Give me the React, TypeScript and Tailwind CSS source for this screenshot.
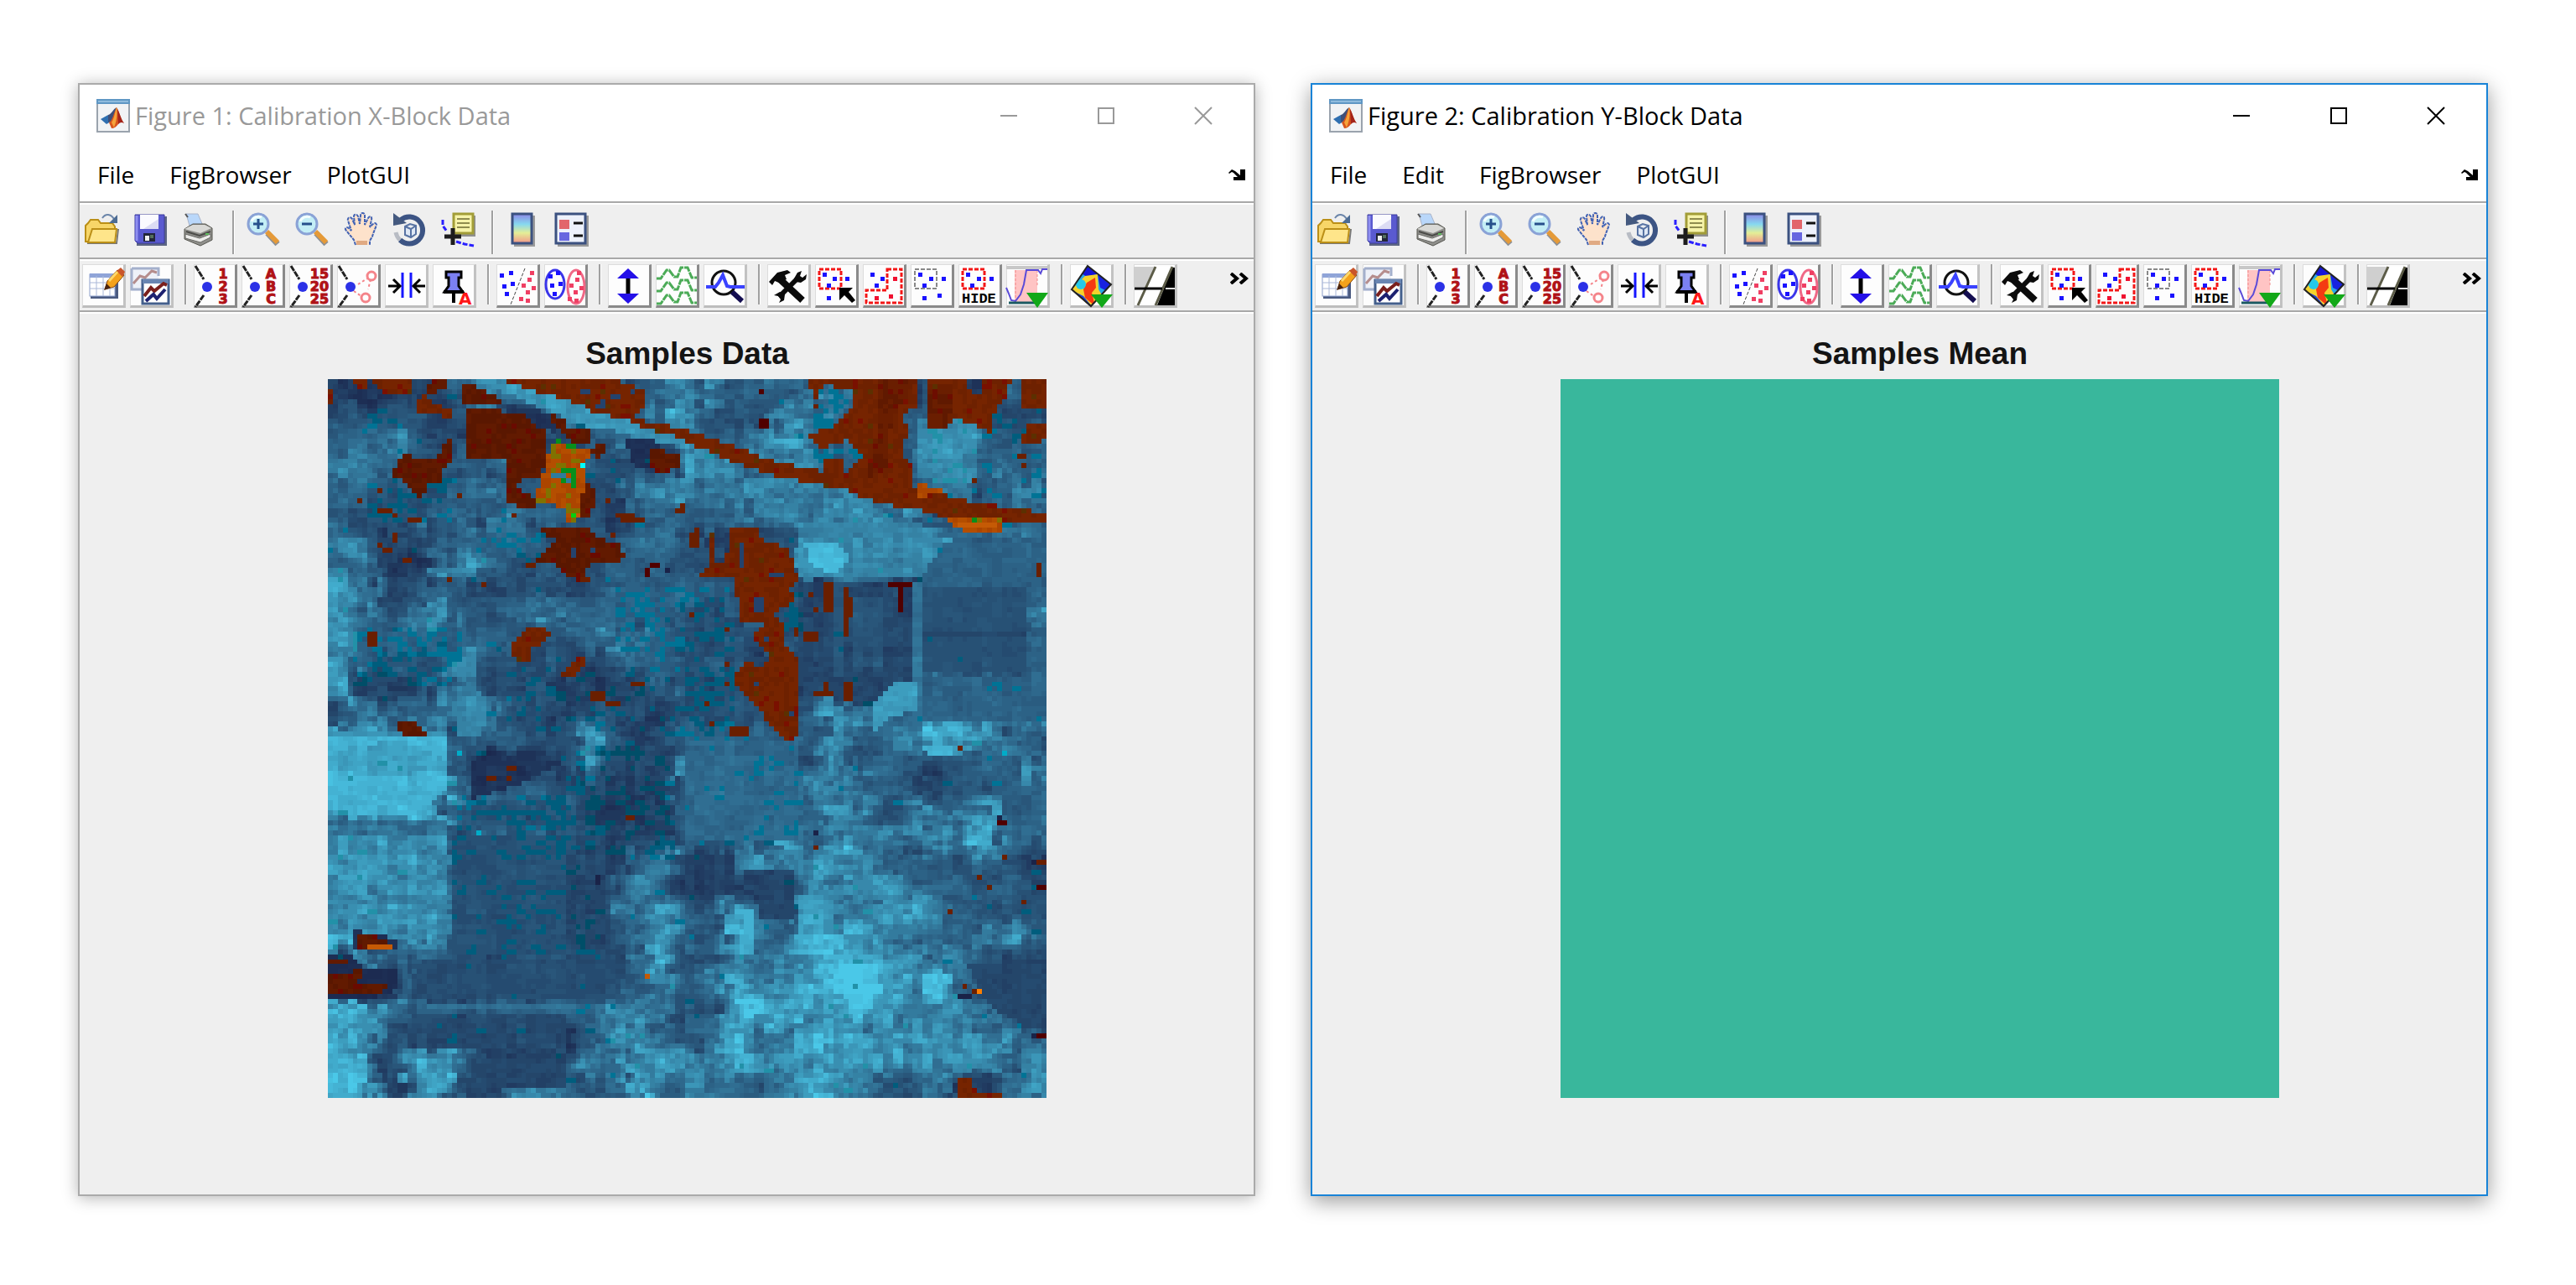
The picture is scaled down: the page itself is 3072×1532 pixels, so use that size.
import type { ReactNode } from "react"

/* ---------- raster of the X-block samples image ---------- */

const N = 145

// brightness of the scene, one digit for each 5x5 block
const COARSE = [
  "21122465533335" + "654445553233243",
  "33332321256445" + "633265532345333",
  "44543222223453" + "644575443466434",
  "65433455234332" + "765555443467454",
  "44333445433355" + "655555565455355",
  "33334455443244" + "445554565644444",
  "54224444433345" + "322338866664454",
  "45215643333444" + "333337966644444",
  "75234323333444" + "443332333133334",
  "65356334554444" + "333332332133335",
  "74444443334554" + "333333234233334",
  "64333533332344" + "333221243233334",
  "72224633322224" + "333332235744444",
  "35445753323332" + "333334654455545",
  "88875344336423" + "444443644577653",
  "77776311125222" + "555543634433445",
  "89988444432222" + "555536554323344",
  "56785433332222" + "444744753555744",
  "66557344433222" + "434375656564844",
  "77667333332245" + "215656764433432",
  "65666333322364" + "222237566544343",
  "75566333323556" + "436537656754333",
  "75675333332357" + "437548876544564",
  "25344333333347" + "336567887755322",
  "21142222233346" + "457667898684322",
  "87644444444555" + "338886787656532",
  "87322223213574" + "447657866666654",
  "87377422236467" + "667676776766656",
  "87267326643484" + "554458753352246",
]

// fields with sharp edges: polygon, brightness, grain
const FIELDS: [string, number, number][] = [
  ["29,0 38,0 73,12 73,14 51,9", 6.6, 0.8],
  ["0,72 24,72 24,83 20,86 17,88 4,88 0,84", 8, 0.6],
  ["0,76 5,74 15,73 24,77 24,79 10,80 0,79", 7.2, 0.7],
  ["0,71 24,71 24,72 0,72", 6.5, 0.5],
  ["0,92 24,92 24,112 0,112", 6.2, 1.3],
  ["0,89 24,89 24,92 0,92", 4.6, 1.2],
  ["25,92 48,92 48,116 25,116", 3, 0.4],
  ["48,96 57,96 57,115 48,115", 2.4, 0.6],
  ["29,77 48,77 38,82 31,84 29,86", 1, 0.5],
  ["19,117 61,117 58,125 17,125 17,121", 2.8, 0.4],
  ["20,126 50,126 50,127 20,127", 4.8, 0.3],
  ["17,128 48,128 48,135 17,135", 2.5, 0.5],
  ["29,137 48,137 48,143 35,143 35,145 28,145", 2.3, 0.5],
  ["72,73 95,73 95,93 72,93", 4.4, 0.5],
  ["72,96 82,96 82,104 72,104", 1.9, 0.5],
  ["84,99 94,99 94,109 87,109 87,103 84,103", 2.3, 0.5],
  ["129,118 145,118 145,131 141,131 133,126", 2.4, 0.3],
  ["120,33 141,33 141,42 120,42", 4, 0.4],
  ["120,42 141,42 141,59 120,59", 3, 0.3],
  ["120,51 141,51 141,52 120,52", 2.4, 0.3],
  ["120,60 145,60 145,69 120,69", 4, 0.5],
  ["95,41 118,41 118,60 114,65 108,66 95,62", 2.3, 0.6],
  ["106,44 112,44 112,58 106,58", 3.3, 0.5],
  ["102,41 104,41 104,60 102,60", 3.3, 0.3],
  ["118,41 120,41 120,71 118,71", 4.9, 0.5],
  ["119,8 131,8 131,21 119,20", 6, 1],
  ["95,29 119,29 124,33 120,40 95,40", 6, 0.8],
  ["96,33 103,33 105,36 103,39 98,38", 8.2, 0.4],
  ["27,54 30,54 30,62 33,66 31,72 26,72", 5.8, 0.8],
  ["110,65 115,61 119,61 119,67 114,68 110,71", 6.9, 0.6],
  ["103,118 111,118 110,127 105,127", 8.8, 0.4],
  ["84,107 86,107 86,116 83,116", 8, 0.5],
  ["5,111 14,113 14,115 5,115", 0.8, 0.4],
  ["0,116 4,116 8,119 14,119 14,123 9,125 0,125", 0.4, 0.3],
  ["60,12 66,12 68,17 62,18", 0.8, 0.4],
  ["36,5 46,7 46,11 41,9 37,7", 1.2, 0.5],
  ["95,104 102,104 102,112 95,113", 7, 0.8],
  ["120,74 126,74 126,76 121,76", 8.2, 0.5],
]

// x, y, w, h, share of teal cells
const TEAL: [number, number, number, number, number][] = [
  [58, 42, 14, 14, 0.35], [72, 42, 10, 30, 0.33], [5, 50, 22, 12, 0.36], [8, 20, 18, 9, 0.28],
  [26, 30, 18, 8, 0.18], [36, 58, 36, 14, 0.13], [25, 84, 23, 32, 0.16], [37, 84, 11, 14, 0.3],
  [48, 73, 22, 24, 0.24], [48, 97, 8, 19, 0.15], [98, 2, 7, 8, 0.4], [98, 14, 10, 4, 0.4],
  [7, 6, 8, 5, 0.3], [120, 6, 25, 18, 0.12], [75, 76, 20, 18, 0.09], [18, 126, 40, 8, 0.07],
  [92, 45, 4, 6, 0.6], [0, 0, 145, 145, 0.012],
]

const REDS: [string, string][] = [
  ["R", "5,0 8,0 8,2 6,2"], ["R", "9,0 17,0 17,3 11,3 10,1"], ["D", "21,0 24,0 24,2 20,3"],
  ["R", "18,4 20,3 21,5 25,6 25,8 22,7 18,7"], ["R", "0,2 1,2 1,5 0,5"],
  ["D", "27,1 29,1 31,2 35,4 35,5 27,5"],
  ["D", "28,6 35,6 36,7 40,7 41,9 44,10 44,16 43,20 39,20 38,22 42,24 42,26 40,26 36,25 36,16 28,16"],
  ["D", "24,12 25,12 25,16 23,19 23,21 20,21 20,23 18,24 17,22 14,20 13,19 14,17 16,15 18,16 22,16"],
  ["D", "45,7 48,8 48,10 53,10 53,13 50,13 48,11 46,10"], ["D", "53,14 56,13 56,15 54,16"],
  ["D", "52,21 54,22 54,25 53,28 51,28 51,26"],
  ["O", "45,13 53,14 53,16 52,17 52,20 51,27 49,29 48,29 48,26 45,25 42,24 43,20 44,18"],
  ["R", "39,0 57,0 64,2 64,6 62,8 72,10 72,12 64,10 60,8 54,7 51,5 45,3 39,2"], ["R", "36,0 41,0 40,1 37,1"],
  ["D", "65,14 71,15 71,18 68,19 65,18"],
  ["D", "42,30 47,30 53,30 54,32 59,33 60,36 58,37 53,37 51,41 49,40 47,38 46,37 42,37 45,34 47,32 45,32"],
  ["R", "40,50 44,50 45,52 42,54 41,55 41,57 38,57 37,54"], ["R", "47,60 49,57 52,56 52,58 50,60"],
  ["D", "14,69 18,69 20,72 15,72"],
  ["R", "71,10 78,12 86,15 92,17 97,18 104,20 112,22 119,22 127,24 132,25 139,26 145,27 145,29 136,29 125,28 118,26 111,25 104,22 97,21 88,19 80,16 71,12"],
  ["R", "97,0 119,0 119,6 116,7 117,10 116,15 118,17 118,22 107,23 104,20 107,17 108,15 105,12 100,14 98,12 97,11 102,10 106,6 106,2 104,2 100,1 99,4 98,3"],
  ["M", "111,0 119,0 115,6 113,12 113,18 109,20 111,10"], ["R", "100,16 104,16 104,20 100,20"],
  ["O", "125,28 136,28 136,31 131,31 126,30"], ["O", "119,21 124,22 124,23 119,24"],
  ["R", "121,0 129,0 130,3 132,3 132,0 138,0 137,3 135,6 134,8 134,12 133,10 129,9 127,7 125,10 121,10"],
  ["M", "121,2 126,1 126,5 125,10 121,10"],
  ["R", "140,0 145,0 145,6 140,6"], ["R", "141,9 145,9 145,11 144,13 140,13"],
  ["R", "81,30 87,30 87,32 93,34 94,37 95,41 93,42 95,44 93,46 90,47 92,49 92,53 95,56 95,72 93,73 89,70 88,67 83,63 82,60 84,57 88,58 90,56 87,54 86,52 89,49 83,49 83,45 82,43 82,40 75,40 77,38 77,31 78,31 78,37 80,37 81,33"],
  ["D", "6,112 8,112 12,113 13,115 6,115"], ["D", "0,117 4,117 4,118 0,118"],
  ["D", "0,120 5,120 6,119 7,119 7,121 6,122 12,122 11,124 2,124 0,124"],
  ["R", "127,141 130,141 131,144 136,144 136,145 127,145"],
]

// single cells and short bars: colour, then x,y,w,h
const DOTS: [string, string][] = [
  ["#6a1f00", "53,63,3,2 56,65,3,1 61,61,3,1 8,51,2,3 13,31,1,2 10,33,1,1 11,34,2,1 15,36,2,1 24,40,1,1 31,41,1,1 10,26,3,1 13,27,1,1 16,28,3,1 10,22,1,1 6,24,1,1 26,23,1,1 37,27,1,1 58,27,4,1 59,28,5,1 57,31,1,1 56,24,1,1 70,26,1,1 71,25,1,2 40,37,2,1 51,40,2,1 139,15,2,1 140,17,1,1 130,20,1,1 73,31,2,3 74,30,1,1 100,41,2,6 104,42,1,10 105,44,1,4 97,43,1,1 98,46,1,1 96,51,3,2 104,61,2,4 98,63,4,1 100,61,1,2 73,47,1,1 76,65,1,1 80,50,1,1 80,57,1,1 80,61,1,1 94,50,1,2 81,70,4,2 143,37,1,3 77,69,1,1 32,80,2,1 36,78,2,1 36,80,1,1 60,88,2,1 127,74,1,1 98,94,1,1 136,96,1,1 143,97,2,1 131,100,1,1 133,102,1,1 140,105,1,1 125,107,1,1 128,122,1,1 130,123,1,1 98,5,1,1"],
  ["#500000", "64,38,1,2 65,37,2,1 87,2,1,1 87,8,2,2 113,41,5,1 115,42,1,5 135,89,2,1 143,102,2,1 143,132,2,1"],
  ["#24436d", "83,33,1,5 89,39,3,1 86,44,2,3 57,3,2,1 51,2,2,1 55,4,1,2 49,34,1,2 53,34,1,1 61,2,1,1 54,5,1,1 88,52,1,1 86,61,1,1 93,67,1,1"],
  ["#1a2348", "135,88,1,1 98,91,1,1 68,38,1,1 142,97,1,1 142,132,1,1 127,124,3,1 54,100,1,2"],
  ["#078f1c", "46,12,1,1 48,13,2,1 47,18,3,1 49,19,1,3 47,20,1,1 130,28,1,1"],
  ["#807200", "45,13,1,3 42,24,2,1 48,23,1,1 48,25,1,2 44,22,1,1 49,16,2,1 50,26,1,1 49,28,1,1"],
  ["#2f7c9c", "45,19,3,1 48,20,1,1"],
  ["#05cf12", "49,27,1,1"],
  ["#00ffff", "51,17,1,1"],
  ["#00acc8", "26,75,1,1 30,91,1,1 136,75,1,1"],
  ["#c55a05", "50,27,1,1 8,114,5,1 64,120,1,1 127,29,8,1"],
  ["#ff7f00", "131,123,1,1"],
]

const hash = (x: number, y: number, s: number) => {
  const n = Math.sin(x * 127.1 + y * 311.7 + s * 74.7) * 43758.5453
  return n - Math.floor(n)
}

const points = (s: string) => s.split(" ").map((p) => p.split(",").map(Number))

function inside(poly: number[][], px: number, py: number) {
  let hit = false
  for (let i = 0, j = poly.length - 1; i < poly.length; j = i++) {
    const [xi, yi] = poly[i]
    const [xj, yj] = poly[j]
    if (yi > py !== yj > py && px < ((xj - xi) * (py - yi)) / (yj - yi) + xi) hit = !hit
  }
  return hit
}

function fill(poly: number[][], put: (x: number, y: number) => void) {
  for (let y = 0; y < N; y++) for (let x = 0; x < N; x++) if (inside(poly, x + 0.5, y + 0.5)) put(x, y)
}

function coarseAt(x: number, y: number) {
  const at = (cx: number, cy: number) => Number(COARSE[Math.max(0, Math.min(28, cy))][Math.max(0, Math.min(28, cx))])
  const fx = (x + 0.5) / 5 - 0.5
  const fy = (y + 0.5) / 5 - 0.5
  const ix = Math.floor(fx)
  const iy = Math.floor(fy)
  // steeper than linear, so that blocks keep visible edges
  const ease = (t: number) => Math.max(0, Math.min(1, (t - 0.5) * 1.8 + 0.5))
  const tx = ease(fx - ix)
  const ty = ease(fy - iy)
  return (at(ix, iy) * (1 - tx) + at(ix + 1, iy) * tx) * (1 - ty) + (at(ix, iy + 1) * (1 - tx) + at(ix + 1, iy + 1) * tx) * ty
}

function blue(v: number) {
  const t = Math.pow(Math.round(Math.max(0, Math.min(9, v)) * 3) / 27, 1.25)
  return `rgb(${Math.round(27 + 47 * t)},${Math.round(40 + 160 * t)},${Math.round(78 + 154 * t)})`
}

function buildRaster() {
  const level: number[][] = []
  const grain: number[][] = []
  for (let y = 0; y < N; y++) {
    level.push([])
    grain.push([])
    for (let x = 0; x < N; x++) {
      const jx = (hash(x >> 1, y >> 1, 11) - 0.5) * 4
      const jy = (hash(x >> 1, y >> 1, 12) - 0.5) * 3
      const v = coarseAt(x + jx, y + jy)
      level[y].push(v)
      grain[y].push(v > 4.2 ? 1.5 : 0.8)
    }
  }
  for (const [shape, v, g] of FIELDS) {
    fill(points(shape), (x, y) => {
      level[y][x] = v
      grain[y][x] = g
    })
  }
  const cells = level.map((row, y) =>
    row.map((v, x) => {
      const fine = hash(x, y, 1) * 0.7 + hash(x >> 1, y, 2) - 0.85
      const wide = hash(x >> 2, y >> 1, 3) + hash(x >> 1, y >> 2, 4) * 1.3 - 1.15
      return blue(v + (fine + wide) * grain[y][x])
    }),
  )
  TEAL.forEach(([x0, y0, w, h, share], i) => {
    for (let y = y0; y < y0 + h; y++)
      for (let x = x0; x < x0 + w; x++) {
        if (hash(x >> (y & 1), y, 20 + i) < share) {
          const v = level[y][x]
          cells[y][x] = v > 5 ? "#2291a8" : v > 3.6 ? "#007395" : v > 2.4 ? "#005d7d" : "#004e68"
        }
      }
  })
  for (const [kind, shape] of REDS) {
    fill(points(shape), (x, y) => {
      const n = hash(x, y, 9)
      if (kind === "O") cells[y][x] = n < 0.08 ? "#807200" : n < 0.5 ? "#b44e00" : "#ac4500"
      else if (kind === "D") cells[y][x] = n < 0.08 ? "#6a0a00" : n < 0.55 ? "#5a1700" : "#621a00"
      else if (kind === "M") cells[y][x] = n < 0.1 ? "#6d0d00" : n < 0.5 ? "#601900" : "#6a1e00"
      else cells[y][x] = n < 0.05 ? "#7a1000" : n < 0.08 ? "#5c3000" : n < 0.5 ? "#6e2100" : "#762400"
    })
  }
  for (const [color, list] of DOTS) {
    for (const [x0, y0, w, h] of points(list)) {
      for (let y = y0; y < y0 + h; y++) for (let x = x0; x < x0 + w; x++) cells[y][x] = color
    }
  }

  // one path for each colour, runs merged along the row
  const paths: Record<string, string> = {}
  cells.forEach((row, y) => {
    let start = 0
    for (let x = 1; x <= N; x++) {
      if (x === N || row[x] !== row[start]) {
        paths[row[start]] = (paths[row[start]] ?? "") + `M${start} ${y}h${x - start}v1h${start - x}z`
        start = x
      }
    }
  })
  return Object.entries(paths)
}

const RASTER = buildRaster()

function SamplesImage() {
  return (
    <svg viewBox="0 0 145 145" className="block h-full w-full" shapeRendering="crispEdges" role="img" aria-label="Samples Data">
      {RASTER.map(([color, d]) => (
        <path key={color} d={d} fill={color} />
      ))}
    </svg>
  )
}

/* ---------- icons ---------- */

function MatlabIcon() {
  return (
    <svg viewBox="0 0 40 40" className="h-10 w-10 shrink-0">
      <rect x="1" y="1" width="38" height="38" fill="#f1f3f5" stroke="#9aa3ad" strokeWidth="2" />
      <rect x="0" y="0" width="40" height="6" fill="#5f97c4" />
      <rect x="2" y="2" width="36" height="2" fill="#8fbbdd" />
      <path d="M5 24 14 19 20 25 12 30z" fill="#2f6fb0" />
      <path d="M14 19c4-1 6-7 10-9l-5 16-5 2z" fill="#3f4f78" />
      <path d="M24 10c3 4 5 14 9 19-3-2-5-2-7 1-2 3-5 5-8 5l-3-7c4-2 6-12 9-18z" fill="#d8551c" />
      <path d="M24 10c1 6 1 14-3 24l-3-6c3-4 4-12 6-18z" fill="#f5a33a" />
      <path d="M25 12c3 5 4 12 8 17-3-2-5-1-7 1z" fill="#a3241b" />
    </svg>
  )
}

const magnifier = (
  <>
    <path d="M25 25 37 38" stroke="#8b8f95" strokeWidth="7" />
    <path d="M24 23 37 36" stroke="#e59a38" strokeWidth="6" />
    <circle cx="14" cy="14" r="12" fill="#c3eef6" stroke="#8aa2d6" strokeWidth="3" />
    <path d="M6 11a9 9 0 0 1 12-5" fill="none" stroke="#f2feff" strokeWidth="3" />
  </>
)

const STANDARD: { label: string; art: ReactNode }[][] = [
  [
    {
      label: "Open File",
      art: (
        <>
          <path d="M3 37 38 37 40 20" fill="none" stroke="#777" strokeWidth="2" />
          <path d="M1 35V16l3-3 3-4h9l3 4h14l3 4v18z" fill="#f7d668" stroke="#bb8f17" strokeWidth="2" />
          <path d="M4 36 9 20H38L36 36z" fill="#fee58a" stroke="#bb8f17" strokeWidth="2" />
          <path d="M21 7c4-6 10-5 14 1" fill="none" stroke="#6c86aa" strokeWidth="2" />
          <path d="M39 3v10h-10z" fill="#4d6c93" />
        </>
      ),
    },
    {
      label: "Save Figure",
      art: (
        <>
          <rect x="4" y="5" width="36" height="35" fill="#5d6683" />
          <path d="M2 3H37V37H5L2 34z" fill="#5a5ad0" stroke="#3c3c9c" />
          <path d="M4 4V34" stroke="#8f8ff0" strokeWidth="3" />
          <rect x="8" y="3" width="22" height="17" fill="#fafaff" />
          <path d="M12 20 30 8V20z" fill="#dcdcf4" />
          <rect x="12" y="25" width="14" height="10" fill="#222639" />
          <rect x="14" y="28" width="5" height="6" fill="#f0f0f0" />
          <rect x="20" y="27" width="4" height="4" fill="#55705f" />
        </>
      ),
    },
    {
      label: "Print Figure",
      art: (
        <>
          <path d="M5 2H19L25 16H9z" fill="#b9d7fa" stroke="#aab4c8" />
          <path d="M4 2 7 6" stroke="#555" strokeWidth="2" />
          <path d="M3 20 13 14H28L36 19V33L22 40 3 32z" fill="#8f8f8b" stroke="#56564f" />
          <path d="M3 20 13 15H27L35 19 22 25z" fill="#d9d9d6" />
          <path d="M4 26 21 31 34 26V30L22 36 4 31z" fill="#ececea" stroke="#6a6a66" />
          <path d="M5 23 21 28 34 23" fill="none" stroke="#4b4b48" strokeWidth="2" />
          <rect x="28" y="25" width="4" height="2" fill="#5fbf5f" />
        </>
      ),
    },
  ],
  [
    {
      label: "Zoom In",
      art: (
        <>
          {magnifier}
          <path d="M8 14H20M14 8V20" stroke="#27508c" strokeWidth="3" />
        </>
      ),
    },
    {
      label: "Zoom Out",
      art: (
        <>
          {magnifier}
          <path d="M8 14H20" stroke="#27508c" strokeWidth="3" />
        </>
      ),
    },
    {
      label: "Pan",
      art: (
        <>
          <path
            d="M14 39 12 33 3 22C0 19 4 17 6 19L9 22 5 10C4 6 8 5 10 8L13 15 12 5C12 2 16 2 17 5L19 14 20 4C20 0 25 0 25 4L25 15 29 7C31 4 34 5 33 9L31 18C34 14 38 11 39 15 37 21 35 25 34 29L31 34V39"
            fill="#fde2cb"
            stroke="#4263b4"
            strokeWidth="2"
            strokeDasharray="4 1"
          />
          <path d="M15 39V34L28 34V39z" fill="#e0aa83" />
        </>
      ),
    },
    {
      label: "Rotate 3D",
      art: (
        <>
          <path d="M10 9A16 16 0 1 1 9 33" fill="none" stroke="#3c5484" strokeWidth="6" />
          <path d="M9 33A16 16 0 0 1 4 24" fill="none" stroke="#b8bcc4" strokeWidth="5" />
          <path d="M1 1 17 13 1 16z" fill="#44597f" />
          <path d="M15 17 21 14 28 16V26L22 30 15 27zM15 17 22 20 28 16M22 20V30" fill="#dfe8f5" stroke="#5873a3" strokeWidth="2" />
        </>
      ),
    },
    {
      label: "Data Cursor",
      art: (
        <>
          <rect x="17" y="4" width="24" height="25" fill="#8f8f8f" />
          <rect x="15" y="2" width="23" height="23" fill="#f6f3a9" stroke="#a29d37" strokeWidth="3" />
          <path d="M19 8H34M19 13H34M19 18H34" stroke="#8f8c4e" strokeWidth="2" />
          <path d="M2 9V16L7 23M18 35 28 38 39 40" fill="none" stroke="#2a20ff" strokeWidth="3" strokeDasharray="6 2" />
          <path d="M4 29H24M14 19V39" stroke="#1c1c1c" strokeWidth="5" />
        </>
      ),
    },
  ],
  [
    {
      label: "Insert Colorbar",
      art: (
        <>
          <rect x="10" y="4" width="25" height="37" fill="#9a9a9a" />
          <linearGradient id="cbar" x2="0" y2="1">
            <stop offset="0" stopColor="#8c86e6" />
            <stop offset=".35" stopColor="#86d8ef" />
            <stop offset=".65" stopColor="#e4ee96" />
            <stop offset="1" stopColor="#f2958a" />
          </linearGradient>
          <rect x="8" y="2" width="23" height="35" fill="url(#cbar)" stroke="#3b5180" strokeWidth="3" />
        </>
      ),
    },
    {
      label: "Insert Legend",
      art: (
        <>
          <rect x="4" y="4" width="37" height="37" fill="#9a9a9a" />
          <rect x="2" y="2" width="35" height="35" fill="#edf1fb" stroke="#3b5180" strokeWidth="3" />
          <rect x="6" y="9" width="12" height="11" fill="#e2656b" />
          <rect x="6" y="24" width="12" height="10" fill="#6766e0" />
          <path d="M23 13H34M23 28H34" stroke="#111" strokeWidth="3" />
        </>
      ),
    },
  ],
]

function Squares({ at, color }: { at: string; color: string }) {
  return (
    <>
      {points(at).map(([x, y]) => (
        <rect key={`${x}-${y}`} x={x - 2} y={y - 2} width="5" height="5" fill={color} />
      ))}
    </>
  )
}

function LabelArt({ lines }: { lines: string[] }) {
  return (
    <>
      <path d="M2 2 12 18M12 37 2 51" stroke="#222" strokeWidth="3" strokeDasharray="7 1" />
      <circle cx="16" cy="27" r="6" fill="#2b31e6" />
      {lines.map((line, i) => (
        <text
          key={line}
          x={lines[0] === "15" ? 36 : 35}
          y={17 + i * 15}
          textAnchor="middle"
          stroke="#b01217"
          className="fill-[#b01217] font-['DejaVu_Sans',sans-serif] text-[16px] font-bold"
        >
          {line}
        </text>
      ))}
    </>
  )
}

const PLOT_TOOLS: { label: string; art: ReactNode; dark?: boolean }[][] = [
  [
    {
      label: "Edit Table",
      art: (
        <>
          <rect x="10" y="12" width="33" height="29" fill="#4a5a80" />
          <rect x="9" y="12" width="30" height="26" fill="#fff" stroke="#8ea0cc" strokeWidth="1" />
          <rect x="9" y="11" width="31" height="5" fill="#8fa4d8" />
          <path d="M9 22H39M9 29H39M17 14V38M25 14V38M33 14V38" stroke="#aab8d8" />
          <path d="M27 30 30 20 42 7 50 13 38 27z" fill="#f4a21c" stroke="#8a4a10" />
          <path d="M41 8 46 4 51 9 48 15z" fill="#c9552a" />
          <path d="M26 31 29 23 34 28z" fill="#4a2412" />
          <path d="M32 20 42 9" stroke="#ffd86a" strokeWidth="3" />
        </>
      ),
    },
    {
      label: "Duplicate Figure",
      art: (
        <>
          <rect x="2" y="4" width="32" height="28" fill="#eef1f8" />
          <path d="M2 5H34V14M2 5V30H14" fill="none" stroke="#a4b0cc" strokeWidth="3" />
          <path d="M4 23 12 14 18 16 26 8 32 10" fill="none" stroke="#b58d8d" strokeWidth="3" />
          <rect x="15" y="19" width="31" height="28" fill="#fff" stroke="#435f8c" strokeWidth="3" />
          <rect x="15" y="18" width="31" height="5" fill="#6985b2" />
          <path d="M17 38 25 28 29 32 40 23 44 25" fill="none" stroke="#7a1f1c" strokeWidth="4" />
          <path d="M19 44 28 36 32 41 42 30" fill="none" stroke="#1d2170" strokeWidth="4" />
        </>
      ),
    },
  ],
  [
    { label: "Label Number", dark: true, art: <LabelArt lines={["1", "2", "3"]} /> },
    { label: "Label Name", dark: true, art: <LabelArt lines={["A", "B", "C"]} /> },
    { label: "Label Value", dark: true, art: <LabelArt lines={["15", "20", "25"]} /> },
    {
      label: "Connect Labels",
      dark: true,
      art: (
        <>
          <LabelArt lines={[]} />
          <path d="M25 24 36 17M20 32 30 39M40 18 37 30" stroke="#f4848a" strokeWidth="2" strokeDasharray="3 3" />
          <circle cx="41" cy="14" r="5" fill="#fff" stroke="#f4848a" strokeWidth="3" />
          <circle cx="34" cy="40" r="5" fill="#fff" stroke="#f4848a" strokeWidth="3" />
        </>
      ),
    },
    {
      label: "Compress Gaps",
      art: (
        <>
          <path d="M21 10V40M31 10V40" stroke="#1616ff" strokeWidth="3" />
          <path d="M4 26H17M10 18 18 26 10 34" fill="none" stroke="#000" strokeWidth="3" />
          <path d="M48 26H34M42 18 34 26 42 34" fill="none" stroke="#000" strokeWidth="3" />
        </>
      ),
    },
    {
      label: "Pin Labels",
      art: (
        <>
          <path d="M25 34V46" stroke="#000" strokeWidth="4" />
          <path d="M16 9H34V16H31V26L36 33H14L19 26V16H16z" fill="#7b80f2" stroke="#000" strokeWidth="3" />
          <path d="M13 33H37" stroke="#000" strokeWidth="4" />
          <text x="31" y="48" className="fill-[#ff1616] font-['DejaVu_Sans',sans-serif] text-[20px] font-bold">
            A
          </text>
        </>
      ),
    },
  ],
  [
    {
      label: "Classes",
      dark: true,
      art: (
        <>
          <Squares at="6,13 17,10 9,26 19,23 12,35" color="#1a12ff" />
          <path d="M34 5 17 48" stroke="#444" strokeWidth="1" strokeDasharray="4 2" />
          <Squares at="42,10 39,18 32,25 44,28 37,33 29,41 37,43" color="#ef3f63" />
        </>
      ),
    },
    {
      label: "Class Ellipses",
      dark: true,
      art: (
        <>
          <ellipse cx="13" cy="24" rx="11" ry="17" fill="none" stroke="#3a35ea" strokeWidth="3" />
          <ellipse cx="38" cy="27" rx="10" ry="20" fill="none" stroke="#f06886" strokeWidth="3" />
          <Squares at="7,14 16,10 9,25 19,23 12,35" color="#1a12ff" />
          <Squares at="41,10 39,18 32,25 44,28 37,33 30,41 38,43" color="#ef3f63" />
        </>
      ),
    },
  ],
  [
    {
      label: "Auto Y Scale",
      dark: true,
      art: (
        <>
          <path d="M24 14V38" stroke="#000" strokeWidth="5" />
          <path d="M24 5 37 17H11zM24 47 37 35H11z" fill="#2410e8" />
        </>
      ),
    },
    {
      label: "Stack Lines",
      dark: true,
      art: (
        <path
          d="M1 17H6L13 7H16L22 15H26L30 4H38L43 16H49M1 32H6L13 22H16L22 30H26L30 19H38L43 31H49M1 47H6L13 37H16L22 45H26L30 34H38L43 46H49"
          fill="none"
          stroke="#4bab57"
          strokeWidth="3"
          strokeDasharray="9 1"
        />
      ),
    },
    {
      label: "Peak Finder",
      art: (
        <>
          <circle cx="24" cy="22" r="14" fill="none" stroke="#111" strokeWidth="3" />
          <path d="M3 27H14L18 22 23 13 28 26 32 27H49" fill="none" stroke="#3a42ff" strokeWidth="4" />
          <path d="M34 33 46 44" stroke="#130d50" strokeWidth="6" />
        </>
      ),
    },
  ],
  [
    {
      label: "Settings",
      art: (
        <>
          <path d="M13 16 42 43" stroke="#0b0b0b" strokeWidth="8" />
          <path d="M2 21 12 10 24 7 28 10 21 13 23 18 14 22 9 20 6 25z" fill="#0b0b0b" />
          <path d="M38 15 14 39" stroke="#0b0b0b" strokeWidth="6" />
          <path d="M32 17 36 10 41 8 39 14 42 16 47 12 46 18 40 22 34 21z" fill="#0b0b0b" />
          <path d="M8 37 13 38 16 42 14 46 20 43 21 36 15 33z" fill="#0b0b0b" />
        </>
      ),
    },
    {
      label: "Select",
      dark: true,
      art: (
        <>
          <rect x="5" y="6" width="26" height="23" fill="none" stroke="#f31616" strokeWidth="3" strokeDasharray="5 2" />
          <Squares at="11,12 23,17 38,17 16,25 16,40" color="#1a12ff" />
          <path d="M29 28H45L40 33 48 43 44 46 35 37 29 43z" fill="#000" />
        </>
      ),
    },
    {
      label: "Select Inverse",
      dark: true,
      art: (
        <>
          <path d="M29 6H46V46H4V31H29z" fill="none" stroke="#f31616" strokeWidth="3" strokeDasharray="5 2" />
          <Squares at="11,12 23,17 16,25" color="#1a12ff" />
          <Squares at="38,17 33,38 16,40" color="#f01030" />
        </>
      ),
    },
    {
      label: "Deselect All",
      dark: true,
      art: (
        <>
          <rect x="5" y="6" width="26" height="23" fill="none" stroke="#888" strokeWidth="2" strokeDasharray="5 2" />
          <Squares at="11,12 24,17 39,17 16,25 16,40 34,37" color="#1a12ff" />
        </>
      ),
    },
    {
      label: "Hide Selected",
      dark: true,
      art: (
        <>
          <rect x="5" y="6" width="26" height="23" fill="none" stroke="#f31616" strokeWidth="3" strokeDasharray="5 2" />
          <Squares at="11,12 24,17 39,17 16,25" color="#1a12ff" />
          <text x="4" y="46" className="fill-black font-['Liberation_Mono',monospace] text-[17px] font-bold">
            HIDE
          </text>
        </>
      ),
    },
    {
      label: "Baseline",
      art: (
        <>
          <rect x="0" y="2" width="49" height="4" fill="#c8c8c8" />
          <rect x="10" y="7" width="27" height="38" fill="#ffc4c4" />
          <path d="M11 7V45M37 7V26" stroke="#f08a8a" strokeWidth="1" strokeDasharray="3 2" />
          <path d="M0 28 3 35 6 43 11 44 17 36 21 24 24 7H38L41 11 43 6H49" fill="none" stroke="#5a4ad8" strokeWidth="2" />
          <path d="M3 46H34" stroke="#1c5a62" strokeWidth="3" />
          <path d="M24 34H50L37 52z" fill="#12a818" />
        </>
      ),
    },
  ],
  [
    {
      label: "Surface Map",
      art: (
        <>
          <clipPath id="tile">
            <path d="M21 2 49 24 25 50 2 30z" />
          </clipPath>
          <g clipPath="url(#tile)">
            <rect width="52" height="52" fill="#27a8e8" />
            <path d="M12 0H34L32 12 20 15 12 10z" fill="#1414d8" />
            <path d="M33 13 52 10V36L36 28z" fill="#1822e0" />
            <path d="M2 30 10 22 18 14 33 12 34 30 40 40 25 50z" fill="#f4d22c" />
            <path d="M20 22 30 16 31 28 26 34 30 50 18 40 16 30z" fill="#f43a12" />
            <circle cx="13" cy="24" r="6" fill="#25c8e8" />
            <path d="M4 32 16 38 26 50H10z" fill="#2340d8" />
          </g>
          <path d="M21 2 49 24 25 50 2 30z" fill="none" stroke="#222" strokeWidth="2" />
          <path d="M25 36H51L38 52z" fill="#12a818" />
        </>
      ),
    },
  ],
  [
    {
      label: "Contrast",
      art: (
        <>
          <rect x="0" y="3" width="24" height="24" fill="#cfcfcf" />
          <path d="M49 6V49H28L46 4H49z" fill="#000" />
          <path d="M26 3H44L24 49H6z" fill="#fff" />
          <path d="M26 3 5 49M46 3 26 49" stroke="#5c5c48" strokeWidth="3" />
          <path d="M1 29H34" stroke="#000" strokeWidth="3" />
          <path d="M38 29H49" stroke="#ddd" strokeWidth="2" />
        </>
      ),
    },
  ],
]

/* ---------- window ---------- */

type FigureProps = {
  title: string
  menus: string[]
  active?: boolean
  heading: string
  children: ReactNode
}

function Separator({ tall }: { tall?: boolean }) {
  return (
    <div className={`flex w-[19px] shrink-0 justify-center ${tall ? "h-[52px]" : "h-12"}`}>
      <div className="w-[3px] border-r border-white bg-[#a0a0a0]" />
    </div>
  )
}

function FigureWindow({ title, menus, active, heading, children }: FigureProps) {
  return (
    <section
      className={
        active
          ? "min-w-0 flex-1 border-2 border-[#1883d7] bg-[#efefef] shadow-[0_6px_24px_rgba(0,0,0,0.4)]"
          : "min-w-0 flex-1 border-2 border-[#aaaaaa] bg-[#efefef] shadow-[0_2px_18px_rgba(0,0,0,0.3)]"
      }
    >
      <header className="flex h-[74px] items-center bg-white pr-0.5 pl-5">
        <MatlabIcon />
        <h1 className={`ml-1.5 flex-1 font-['Open_Sans','Noto_Sans',sans-serif] text-[29px] leading-10 ${active ? "text-black" : "text-[#999999]"}`}>
          {title}
        </h1>
        <div className={`flex ${active ? "text-black" : "text-[#999999]"}`}>
          {["M0 10H20", "M1 1H19V19H1z", "M0 0 20 20M20 0 0 20"].map((d, i) => (
            <button key={d} aria-label={["Minimize", "Maximize", "Close"][i]} className="flex h-[74px] w-[116px] items-center justify-center">
              <svg viewBox="0 0 20 20" className="h-5 w-5 overflow-visible">
                <path d={d} fill="none" stroke="currentColor" strokeWidth="2" />
              </svg>
            </button>
          ))}
        </div>
      </header>

      <nav className="flex h-[67px] items-center gap-[42px] border-b-2 border-[#a8a8a8] bg-white pr-2.5 pl-[21px]">
        {menus.map((m) => (
          <button key={m} className="font-['Open_Sans','Noto_Sans',sans-serif] text-[28px] leading-10 text-black">
            {m}
          </button>
        ))}
        <button aria-label="Dock" className="ml-auto">
          <svg viewBox="0 0 20 14" className="h-3.5 w-5">
            <path d="M0 5 4 1 8 3 14 8V1H20V14H6V10H11L6 5 4 4 1 6z" fill="#000" />
          </svg>
        </button>
      </nav>

      <div className="flex h-[67px] items-start border-t-2 border-b-2 border-t-white border-b-[#a8a8a8] pt-[7px]">
        {STANDARD.map((group, g) => (
          <div key={g} className="flex">
            {g > 0 && <Separator tall />}
            {group.map((tool) => (
              <button key={tool.label} aria-label={tool.label} className="flex h-11 w-[58px] justify-center pt-0.5 pr-1">
                <svg viewBox="0 0 42 42" className="h-[42px] w-[42px]">
                  {tool.art}
                </svg>
              </button>
            ))}
          </div>
        ))}
      </div>

      <div className="flex h-[63px] items-start border-t-2 border-b-2 border-t-white border-b-[#a8a8a8] pt-1 pl-[3px]">
        {PLOT_TOOLS.map((group, g) => (
          <div key={g} className="flex gap-[5px] pr-[5px]">
            {g > 0 && (
              <span className="-mr-[5px]">
                <Separator />
              </span>
            )}
            {group.map((tool) => (
              <button
                key={tool.label}
                aria-label={tool.label}
                className={`h-[52px] w-[52px] shrink-0 border-t border-l border-[#dcdcdc] border-r-[3px] border-b-[3px] bg-[#fdfdfd] ${tool.dark ? "border-r-[#8a8a8a] border-b-[#8a8a8a]" : "border-r-[#c2c2c2] border-b-[#bdbdbd]"}`}
              >
                <svg viewBox="1 1 48 48" className="block h-12 w-12 overflow-visible">
                  {tool.art}
                </svg>
              </button>
            ))}
          </div>
        ))}
        <button aria-label="More tools" className="mt-2.5 mr-1.5 ml-auto">
          <svg viewBox="0 0 22 14" className="h-3.5 w-[22px]">
            <path d="M1 1 8 7 1 13M12 1 19 7 12 13" fill="none" stroke="#000" strokeWidth="4" />
          </svg>
        </button>
      </div>

      <div className="flex flex-col items-center border-t-2 border-white pt-[25px] pr-[9.5%] pb-[115px] pl-[13%]">
        <h2 className="mb-[7px] font-['Liberation_Sans',Arial,sans-serif] text-[37px] leading-[46px] font-bold text-[#141414]">{heading}</h2>
        <div className="aspect-square w-full max-w-[857px]">{children}</div>
      </div>
    </section>
  )
}

export default function App() {
  return (
    <main className="flex min-h-screen items-start gap-[66px] bg-white pt-[99px] pr-[105px] pb-[105px] pl-[93px]">
      <FigureWindow title="Figure 1: Calibration X-Block Data" menus={["File", "FigBrowser", "PlotGUI"]} heading="Samples Data">
        <SamplesImage />
      </FigureWindow>
      <FigureWindow active title="Figure 2: Calibration Y-Block Data" menus={["File", "Edit", "FigBrowser", "PlotGUI"]} heading="Samples Mean">
        <div className="h-full w-full bg-[#39b79c]" />
      </FigureWindow>
    </main>
  )
}
